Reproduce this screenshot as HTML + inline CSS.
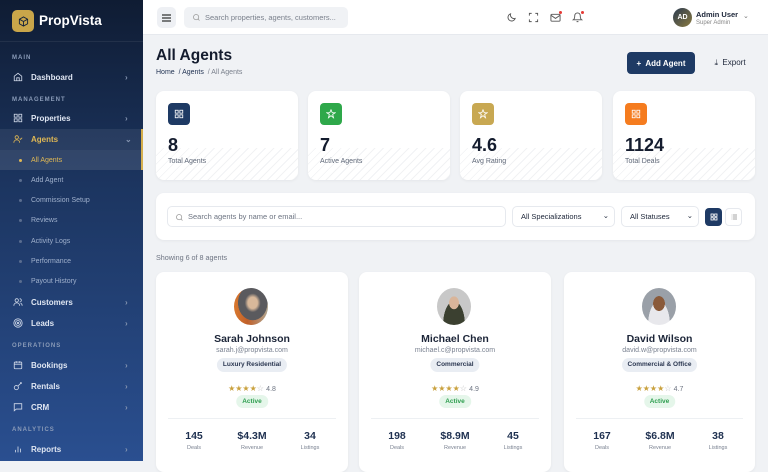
<!DOCTYPE html>
<html><head><meta charset="utf-8"><style>
*{box-sizing:border-box;margin:0;padding:0}
body{width:768px;height:461px;overflow:hidden;font-family:"Liberation Sans",sans-serif;background:#f0f2f5;position:relative}
.sb{position:absolute;left:0;top:0;width:143px;height:461px;background:linear-gradient(180deg,#0f1c33 0%,#1c3560 40%,#2a4f90 100%)}
.abs{position:absolute}
.lbl{position:absolute;left:12px;font-size:6px;font-weight:bold;letter-spacing:1px;color:#8a9bb8}
.it{position:absolute;left:0;width:143px;height:20px;display:flex;align-items:center;font-size:8px;font-weight:bold;color:#dfe6f2}
.it svg{position:absolute;left:13px}
.it span{position:absolute;left:31px}
.it i{position:absolute;left:125px;font-style:normal;color:#8696b2;font-size:8px}
.sub{position:absolute;left:0;width:143px;height:20px;font-size:7px;color:#9fb0cc;display:flex;align-items:center}
.sub span{position:absolute;left:31px}
.sub b{position:absolute;left:19px;width:3px;height:3px;border-radius:50%;background:#5a6d8f}
.top{position:absolute;left:143px;top:0;width:625px;height:35px;background:#fff;border-bottom:1px solid #e6e9ee}
.card{position:absolute;background:#fff;border-radius:8px;box-shadow:0 1px 3px rgba(0,0,0,.05)}
.st .ic{position:absolute;left:12px;top:12px;width:22px;height:22px;border-radius:4px;display:flex;align-items:center;justify-content:center}
.st .n{position:absolute;left:12px;top:44px;font-size:18px;font-weight:bold;color:#141c2e}
.st .l{position:absolute;left:12px;top:67px;font-size:7px;color:#5f6878}
.st .hatch{position:absolute;left:0;right:0;bottom:0;height:32px;border-radius:0 0 8px 8px;background:repeating-linear-gradient(135deg,transparent 0 5px,#f1f2f4 5px 6px)}
.ag{top:272px;height:200px;width:192px;text-align:center}
.ag .av{position:absolute;left:78px;top:16px;width:34px;height:37px;border-radius:50%}
.ag .nm{position:absolute;left:0;right:0;top:61px;font-size:10.5px;font-weight:bold;color:#1c2538}
.ag .em{position:absolute;left:0;right:0;top:75px;font-size:7px;color:#7a8291}
.ag .tg{position:absolute;top:86px;height:14px;left:50%;transform:translateX(-50%);background:#e9edf3;border-radius:7px;font-size:6.5px;font-weight:bold;color:#2a3650;padding:0 6px;line-height:14px;white-space:nowrap}
.ag .rt{position:absolute;left:0;right:0;top:112px;font-size:8px;color:#c9a13e}
.ag .rt em{font-style:normal;color:#6d7482;font-size:7px}
.ag .ac{position:absolute;top:123px;left:50%;transform:translateX(-50%);height:13px;line-height:13px;padding:0 6px;background:#e5f6ea;color:#2e9e4f;font-size:6.5px;font-weight:bold;border-radius:7px}
.ag .dv{position:absolute;left:12px;right:12px;top:146px;border-top:1px solid #edf0f3}
.ag .s{position:absolute;top:158px;width:60px;text-align:center}
.ag .s b{display:block;font-size:10.5px;color:#1e3050}
.ag .s small{display:block;font-size:5.5px;color:#7a8291;margin-top:3px}
</style></head><body>
<div class="sb">
 <div class="abs" style="left:12px;top:10px;width:22px;height:22px;border-radius:5px;background:#c9a64a;display:flex;align-items:center;justify-content:center"><svg width="11" height="11" viewBox="0 0 24 24" fill="none" stroke="#13223c" stroke-width="2"><path d="M12 2l9 5v10l-9 5-9-5V7z M3 7l9 5 9-5 M12 12v10"/></svg></div>
 <div class="abs" style="left:39px;top:13px;color:#fff;font-size:13.5px;font-weight:bold">PropVista</div>
 <div class="abs" style="left:0;top:41px;width:143px;border-top:1px solid rgba(255,255,255,.07)"></div>
 <div class="lbl" style="top:55px">MAIN</div>
 <div class="it" style="top:67px"><svg width="10" height="10" viewBox="0 0 24 24" fill="none" stroke="#cfd8e8" stroke-width="2"><path d="M3 10l9-7 9 7v11H3z M9 21v-7h6v7"/></svg><span>Dashboard</span><i>›</i></div>
 <div class="lbl" style="top:97px">MANAGEMENT</div>
 <div class="it" style="top:108px"><svg width="10" height="10" viewBox="0 0 24 24" fill="none" stroke="#cfd8e8" stroke-width="2"><rect x="3" y="3" width="7" height="7"/><rect x="14" y="3" width="7" height="7"/><rect x="3" y="14" width="7" height="7"/><rect x="14" y="14" width="7" height="7"/></svg><span>Properties</span><i>›</i></div>
 <div class="abs" style="left:0;top:129px;width:143px;height:41px;background:rgba(255,255,255,.07)"></div>
 <div class="abs" style="left:141px;top:129px;width:2px;height:41px;background:#d4ad4a"></div>
 <div class="it" style="top:129px;color:#e0b854"><svg width="10" height="10" viewBox="0 0 24 24" fill="none" stroke="#e0b854" stroke-width="2"><circle cx="9" cy="8" r="4"/><path d="M2 21c0-4 3-7 7-7s7 3 7 7 M16 11l2 2 4-4"/></svg><span>Agents</span><i style="color:#8696b2">⌄</i></div>
 <div class="sub" style="top:150px;color:#e0b854;background:rgba(255,255,255,.04)"><b style="background:#e0b854"></b><span>All Agents</span></div>
 <div class="sub" style="top:170px"><b></b><span>Add Agent</span></div>
 <div class="sub" style="top:190px"><b></b><span>Commission Setup</span></div>
 <div class="sub" style="top:210px"><b></b><span>Reviews</span></div>
 <div class="sub" style="top:231px"><b></b><span>Activity Logs</span></div>
 <div class="sub" style="top:251px"><b></b><span>Performance</span></div>
 <div class="sub" style="top:271px"><b></b><span>Payout History</span></div>
 <div class="it" style="top:292px"><svg width="10" height="10" viewBox="0 0 24 24" fill="none" stroke="#cfd8e8" stroke-width="2"><circle cx="9" cy="8" r="4"/><path d="M2 21c0-4 3-7 7-7s7 3 7 7 M16 4a4 4 0 010 8 M22 21c0-3-2-6-4-6"/></svg><span>Customers</span><i>›</i></div>
 <div class="it" style="top:313px"><svg width="10" height="10" viewBox="0 0 24 24" fill="none" stroke="#cfd8e8" stroke-width="2"><circle cx="12" cy="12" r="10"/><circle cx="12" cy="12" r="6"/><circle cx="12" cy="12" r="2"/></svg><span>Leads</span><i>›</i></div>
 <div class="lbl" style="top:343px">OPERATIONS</div>
 <div class="it" style="top:355px"><svg width="10" height="10" viewBox="0 0 24 24" fill="none" stroke="#cfd8e8" stroke-width="2"><rect x="3" y="5" width="18" height="16" rx="2"/><path d="M3 10h18 M8 3v4 M16 3v4"/></svg><span>Bookings</span><i>›</i></div>
 <div class="it" style="top:376px"><svg width="10" height="10" viewBox="0 0 24 24" fill="none" stroke="#cfd8e8" stroke-width="2"><circle cx="8" cy="16" r="5"/><path d="M12 12l8-8 M17 4h3v3"/></svg><span>Rentals</span><i>›</i></div>
 <div class="it" style="top:397px"><svg width="10" height="10" viewBox="0 0 24 24" fill="none" stroke="#cfd8e8" stroke-width="2"><path d="M3 4h18v13H8l-5 4z"/></svg><span>CRM</span><i>›</i></div>
 <div class="lbl" style="top:427px">ANALYTICS</div>
 <div class="it" style="top:439px"><svg width="10" height="10" viewBox="0 0 24 24" fill="none" stroke="#cfd8e8" stroke-width="2"><path d="M6 20v-6 M12 20V6 M18 20v-9"/></svg><span>Reports</span><i>›</i></div>
</div>

<div class="top">
 <div class="abs" style="left:14px;top:7px;width:19px;height:21px;border-radius:5px;background:#eef0f4;display:flex;align-items:center;justify-content:center"><svg width="9" height="8" viewBox="0 0 9 8"><path d="M0 1h9M0 4h9M0 7h9" stroke="#333" stroke-width="1.2"/></svg></div>
 <div class="abs" style="left:41px;top:7px;width:164px;height:21px;border-radius:5px;background:#f0f2f5"><svg class="abs" style="left:8px;top:6px" width="9" height="9" viewBox="0 0 24 24" fill="none" stroke="#999" stroke-width="2"><circle cx="11" cy="11" r="7"/><path d="M20 20l-4-4"/></svg><span class="abs" style="left:21px;top:6px;font-size:7.5px;color:#7a808c">Search properties, agents, customers...</span></div>
 <svg class="abs" style="left:363px;top:12px" width="11" height="11" viewBox="0 0 24 24" fill="none" stroke="#555" stroke-width="2"><path d="M20 14A8 8 0 0110 4a8 8 0 1010 10z"/></svg>
 <svg class="abs" style="left:385px;top:12px" width="11" height="11" viewBox="0 0 24 24" fill="none" stroke="#555" stroke-width="2"><path d="M3 8V3h5 M16 3h5v5 M21 16v5h-5 M8 21H3v-5"/></svg>
 <svg class="abs" style="left:407px;top:12px" width="11" height="11" viewBox="0 0 24 24" fill="none" stroke="#555" stroke-width="2"><rect x="2" y="5" width="20" height="15" rx="2"/><path d="M2 7l10 7 10-7"/></svg>
 <div class="abs" style="left:416px;top:11px;width:3px;height:3px;border-radius:50%;background:#e53935"></div>
 <svg class="abs" style="left:429px;top:12px" width="11" height="11" viewBox="0 0 24 24" fill="none" stroke="#555" stroke-width="2"><path d="M6 8a6 6 0 0112 0c0 7 3 9 3 9H3s3-2 3-9 M10 21h4"/></svg>
 <div class="abs" style="left:438px;top:11px;width:3px;height:3px;border-radius:50%;background:#e53935"></div>
 <div class="abs" style="left:530px;top:8px;width:19px;height:19px;border-radius:50%;background:linear-gradient(135deg,#2a3a50,#8a7a40);color:#fff;font-size:7px;font-weight:bold;display:flex;align-items:center;justify-content:center">AD</div>
 <div class="abs" style="left:553px;top:10px;font-size:7.5px;font-weight:bold;color:#1c2538">Admin User</div>
 <div class="abs" style="left:553px;top:20px;font-size:6px;color:#888">Super Admin</div>
 <div class="abs" style="left:600px;top:12px;font-size:7px;color:#777">⌄</div>
</div>

<div class="abs" style="left:156px;top:47px;font-size:15.5px;font-weight:bold;color:#141c2e">All Agents</div>
<div class="abs" style="left:156px;top:69px;font-size:7px;color:#1e3050">Home <span style="color:#1e3050">&nbsp;/ Agents</span> <span style="color:#7a808c">&nbsp;/ All Agents</span></div>
<div class="abs" style="left:627px;top:52px;width:68px;height:22px;border-radius:4px;background:#1e3a64;color:#fff;font-size:8px;font-weight:bold;display:flex;align-items:center;justify-content:center">+&nbsp; Add Agent</div>
<div class="abs" style="left:699px;top:52px;width:62px;height:22px;border-radius:4px;color:#1c2538;font-size:8px;display:flex;align-items:center;justify-content:center">⤓&nbsp; Export</div>

<div class="card st" style="left:156px;top:91px;width:142px;height:89px"><div class="hatch"></div><div class="ic" style="background:#1e3a64"><svg width="10" height="10" viewBox="0 0 24 24" fill="none" stroke="#fff" stroke-width="2"><rect x="3" y="3" width="7" height="7"/><rect x="14" y="3" width="7" height="7"/><rect x="3" y="14" width="7" height="7"/><rect x="14" y="14" width="7" height="7"/></svg></div><div class="n">8</div><div class="l">Total Agents</div></div>
<div class="card st" style="left:308px;top:91px;width:142px;height:89px"><div class="hatch"></div><div class="ic" style="background:#2ea84a"><svg width="10" height="10" viewBox="0 0 24 24" fill="none" stroke="#fff" stroke-width="2"><path d="M12 2l3 7h7l-6 4 2 8-6-5-6 5 2-8-6-4h7z"/></svg></div><div class="n">7</div><div class="l">Active Agents</div></div>
<div class="card st" style="left:460px;top:91px;width:142px;height:89px"><div class="hatch"></div><div class="ic" style="background:#c8a852"><svg width="10" height="10" viewBox="0 0 24 24" fill="none" stroke="#fff" stroke-width="2"><path d="M12 2l3 7h7l-6 4 2 8-6-5-6 5 2-8-6-4h7z"/></svg></div><div class="n">4.6</div><div class="l">Avg Rating</div></div>
<div class="card st" style="left:613px;top:91px;width:142px;height:89px"><div class="hatch"></div><div class="ic" style="background:#f57c1f"><svg width="10" height="10" viewBox="0 0 24 24" fill="none" stroke="#fff" stroke-width="2"><rect x="3" y="3" width="7" height="7"/><rect x="14" y="3" width="7" height="7"/><rect x="3" y="14" width="7" height="7"/><rect x="14" y="14" width="7" height="7"/></svg></div><div class="n">1124</div><div class="l">Total Deals</div></div>

<div class="card" style="left:156px;top:193px;width:599px;height:47px">
 <div class="abs" style="left:11px;top:13px;width:339px;height:21px;border:1px solid #e6e9ee;border-radius:5px"><svg class="abs" style="left:7px;top:6px" width="9" height="9" viewBox="0 0 24 24" fill="none" stroke="#999" stroke-width="2"><circle cx="11" cy="11" r="7"/><path d="M20 20l-4-4"/></svg><span class="abs" style="left:20px;top:5px;font-size:7.5px;color:#6d7482">Search agents by name or email...</span></div>
 <div class="abs" style="left:356px;top:13px;width:103px;height:21px;border:1px solid #e6e9ee;border-radius:5px;font-size:7.5px;color:#1c2538;padding:5px 0 0 8px">All Specializations<span class="abs" style="right:5px;top:4px">⌄</span></div>
 <div class="abs" style="left:465px;top:13px;width:78px;height:21px;border:1px solid #e6e9ee;border-radius:5px;font-size:7.5px;color:#1c2538;padding:5px 0 0 8px">All Statuses<span class="abs" style="right:5px;top:4px">⌄</span></div>
 <div class="abs" style="left:549px;top:15px;width:17px;height:18px;border-radius:4px;background:#1e3a64;display:flex;align-items:center;justify-content:center"><svg width="8" height="8" viewBox="0 0 24 24" fill="none" stroke="#fff" stroke-width="2.5"><rect x="3" y="3" width="7" height="7"/><rect x="14" y="3" width="7" height="7"/><rect x="3" y="14" width="7" height="7"/><rect x="14" y="14" width="7" height="7"/></svg></div>
 <div class="abs" style="left:569px;top:15px;width:17px;height:18px;border-radius:4px;border:1px solid #e6e9ee;display:flex;align-items:center;justify-content:center"><svg width="8" height="8" viewBox="0 0 24 24" fill="none" stroke="#888" stroke-width="2"><path d="M8 6h13M8 12h13M8 18h13M3 6h1M3 12h1M3 18h1"/></svg></div>
</div>

<div class="abs" style="left:156px;top:253px;font-size:7.2px;color:#6d7482">Showing 6 of 8 agents</div>

<div class="card ag" style="left:156px">
 <div class="av" style="background:radial-gradient(ellipse at 55% 40%,#d8b89a 0 18%,#5a5a5e 30% 55%,transparent 56%),linear-gradient(90deg,#d9782e,#c0602a 40%,#b0a590)"></div>
 <div class="nm">Sarah Johnson</div><div class="em">sarah.j@propvista.com</div><div class="tg">Luxury Residential</div>
 <div class="rt">★★★★<span style="color:#bbb">☆</span> <em>4.8</em></div><div class="ac">Active</div><div class="dv"></div>
 <div class="s" style="left:8px"><b>145</b><small>Deals</small></div><div class="s" style="left:66px"><b>$4.3M</b><small>Revenue</small></div><div class="s" style="left:124px"><b>34</b><small>Listings</small></div>
</div>
<div class="card ag" style="left:359px">
 <div class="av" style="background:radial-gradient(ellipse at 50% 40%,#d9b59a 0 20%,transparent 21%),radial-gradient(ellipse at 50% 100%,#3b4030 0 45%,transparent 46%),#c8c8c8"></div>
 <div class="nm">Michael Chen</div><div class="em">michael.c@propvista.com</div><div class="tg">Commercial</div>
 <div class="rt">★★★★<span style="color:#bbb">☆</span> <em>4.9</em></div><div class="ac">Active</div><div class="dv"></div>
 <div class="s" style="left:8px"><b>198</b><small>Deals</small></div><div class="s" style="left:66px"><b>$8.9M</b><small>Revenue</small></div><div class="s" style="left:124px"><b>45</b><small>Listings</small></div>
</div>
<div class="card ag" style="left:564px;width:191px">
 <div class="av" style="background:radial-gradient(ellipse at 50% 42%,#8a5a3a 0 24%,transparent 25%),radial-gradient(ellipse at 50% 100%,#e8e8ec 0 45%,transparent 46%),#9aa0a8"></div>
 <div class="nm">David Wilson</div><div class="em">david.w@propvista.com</div><div class="tg">Commercial &amp; Office</div>
 <div class="rt">★★★★<span style="color:#bbb">☆</span> <em>4.7</em></div><div class="ac">Active</div><div class="dv"></div>
 <div class="s" style="left:8px"><b>167</b><small>Deals</small></div><div class="s" style="left:66px"><b>$6.8M</b><small>Revenue</small></div><div class="s" style="left:124px"><b>38</b><small>Listings</small></div>
</div>
</body></html>
